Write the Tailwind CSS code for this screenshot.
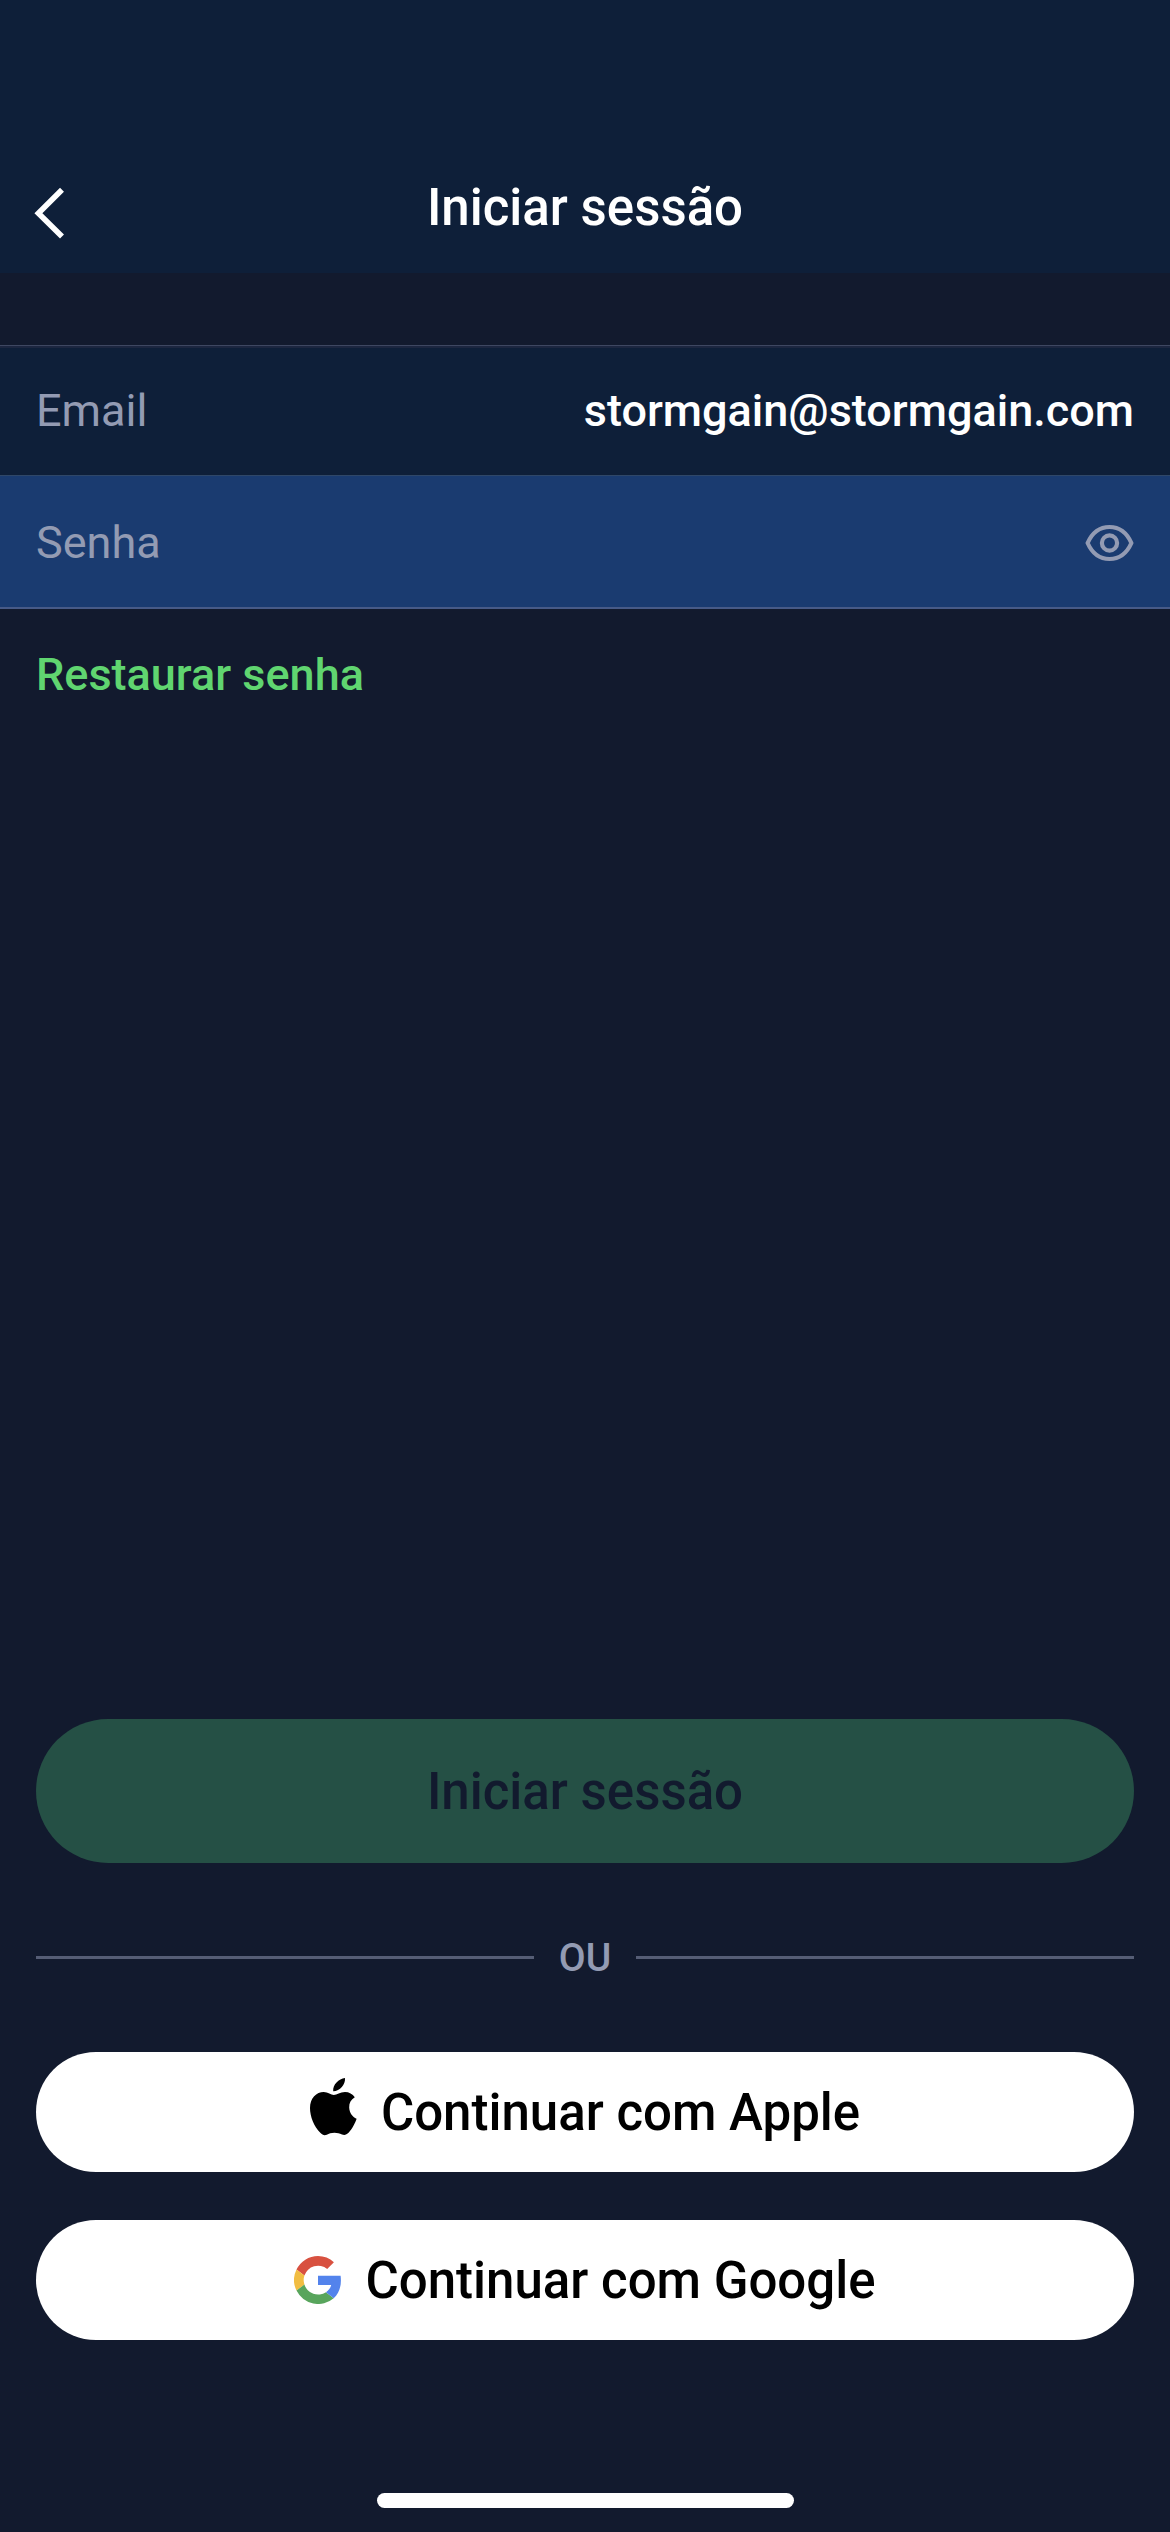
<!DOCTYPE html>
<html lang="pt">
<head>
<meta charset="utf-8">
<title>Iniciar sessão</title>
<script src="https://cdn.jsdelivr.net/npm/@tailwindcss/browser@4"></script>
</head>
<body class="flex h-[2532px] w-[1170px] flex-col overflow-hidden bg-[#121a2e] font-[Roboto,sans-serif] text-white">
  <header class="grid h-[273px] shrink-0 grid-cols-[1fr_auto_1fr] items-center bg-[#0e1f39] pt-[142px]">
    <svg class="ml-[34px] mt-[10px] h-[52px] w-[32px]" viewBox="0 0 32 52" fill="none" stroke="#fff" stroke-width="5.6"><path d="M28 2.8 4.4 26.2 28 49.6"/></svg>
    <h1 class="text-[51px] leading-[60px] font-medium">Iniciar sessão</h1>
  </header>
  <div class="mt-[72px] flex h-[131px] shrink-0 items-center justify-between border-t border-b border-t-[#3e4761] border-b-[#2f4768] bg-[#0e1f39] px-9 text-[45px] shadow-[inset_0_2px_0_#1c2640]">
    <span class="text-[#939bb3]">Email</span>
    <span class="font-medium">stormgain@stormgain.com</span>
  </div>
  <div class="flex h-[133px] shrink-0 items-center justify-between border-b-2 border-b-[#475a87] bg-[#1a3b70] px-9 pt-[2px] text-[45px]">
    <span class="text-[#939bb3]">Senha</span>
    <svg class="h-[38px] w-[49px]" viewBox="0 0 49 38" fill="none" stroke="#939bb3" stroke-width="4.2"><path d="M2.6 19C7.5 8 15 3 24.500 3S41.500 8 46.400 19C41.500 30 34 35 24.500 35S7.500 30 2.600 19Z" stroke-linejoin="round"/><circle cx="24.500" cy="19" r="7.600"/></svg>
  </div>
  <a class="mt-[36px] ml-9 self-start text-[45px] leading-[60px] font-medium text-[#60d570]">Restaurar senha</a>

  <main class="mt-auto flex shrink-0 flex-col px-9">
    <button class="flex h-[144px] items-center justify-center rounded-full bg-[#255045] pt-[2px] text-[51px] font-medium text-[#121a2e]">Iniciar sessão</button>
    <div class="mt-[64px] flex h-[60px] items-center">
      <div class="h-[3px] flex-1 bg-[#555d75]"></div>
      <span class="w-[102px] pt-px text-center text-[39px] leading-[60px] font-medium text-[#939bb3]">OU</span>
      <div class="h-[3px] flex-1 bg-[#555d75]"></div>
    </div>
    <button class="mt-[65px] flex h-[120px] items-center justify-center rounded-full bg-white text-[51px] font-medium text-black">
      <svg class="mr-[24px] mb-[10px] h-[58px] w-[47px]" viewBox="0 0 47 58" fill="#000"><path d="M35 0C35.600 6.500 29.800 13.300 23.200 13.200C22.600 6.800 28.800.6 35 0ZM23.800 17C27 17 30 14 35 14C39 14 42.600 16 44.800 19.200C41 21.500 39 25 39.200 29.500C39.400 35 42.500 39 46.600 40.700C45.500 44.500 42 51 38.800 54.500C36.500 57 34.500 57.300 32 56.600C29.500 55.500 27.500 54.800 24.500 54.800C21 54.800 19 55.800 16.800 56.700C14.500 57.600 12.500 57.200 10.300 54.800C4 48.500 0 38.500 0 30C0 20 6.500 14 13.700 14C18 14 21 17 23.800 17Z"/></svg>
      <span class="pt-[2px]">Continuar com Apple</span>
    </button>
    <button class="mt-12 flex h-[120px] items-center justify-center rounded-full bg-white text-[51px] font-medium text-black">
      <svg class="mr-[24px] h-12 w-[47px]" viewBox="0 0 47 48"><path fill="#d85140" d="M24 0C30 0 35.600 2.200 39.900 6.200L33.200 12.900A14.500 14.500 0 0 0 10.400 19.600L2.500 13.500A24 24 0 0 1 24 0Z"/><path fill="#f1bd42" d="M2.500 13.500 10.400 19.600A14.500 14.500 0 0 0 10.400 28.600L2.500 34.600A24 24 0 0 1 2.500 13.500Z"/><path fill="#58a55c" d="M2.500 34.600 10.400 28.600A14.400 14.400 0 0 0 32 36.200L39.700 42.200A24 24 0 0 1 2.500 34.600Z"/><path fill="#5383ec" d="M24 19.800H46.600C47.800 29 45.500 37 39.700 42.200L32 36.200C34.900 34.200 36.600 31.600 37.200 29H24Z"/></svg>
      <span class="pt-[2px]">Continuar com Google</span>
    </button>
    <div class="mt-[153px] mb-6 h-[15px] w-[417px] self-center rounded-[8px] bg-white"></div>
  </main>
</body>
</html>
